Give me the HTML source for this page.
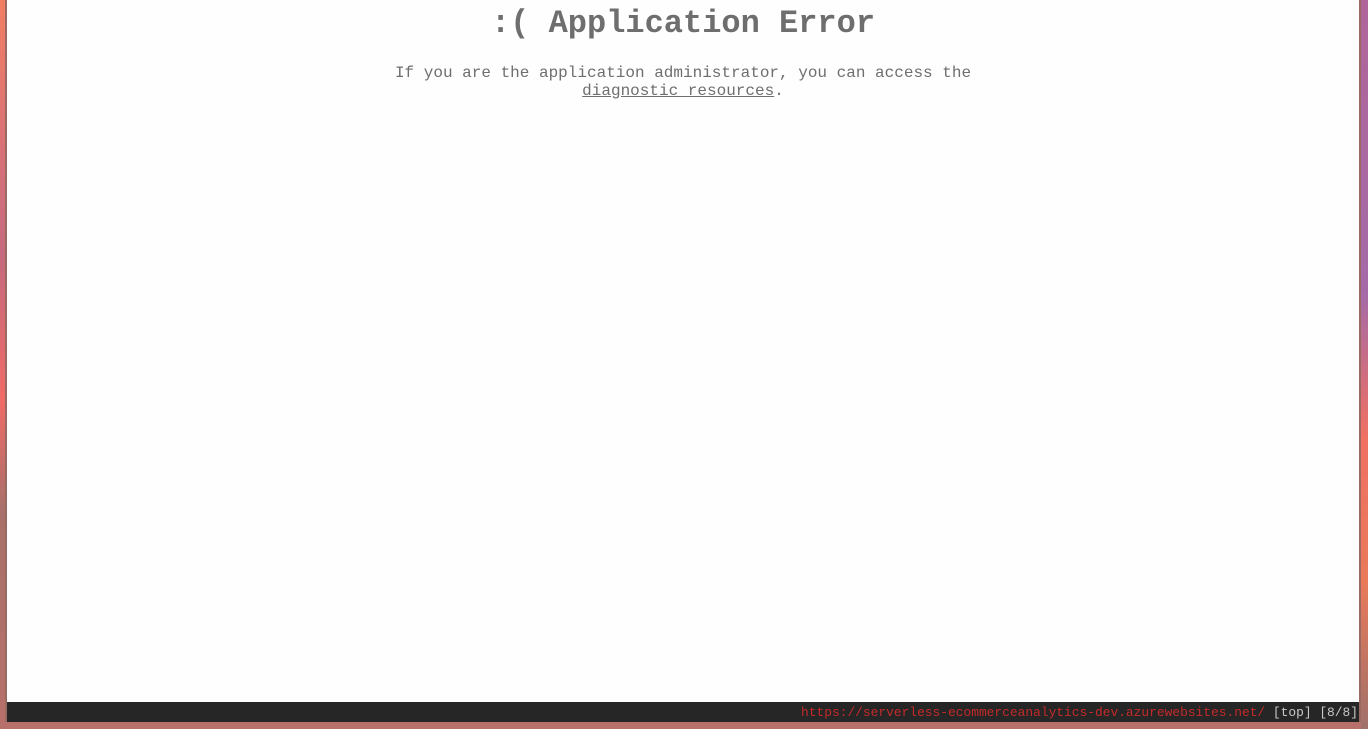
<!DOCTYPE html>
<html><head><meta charset="utf-8"><style>
html,body{margin:0;padding:0;width:1368px;height:729px;overflow:hidden;background:#d9706a;}
.bg{position:absolute;inset:0;background:linear-gradient(180deg,#f27e62 0%,#d97177 20%,#c56a7e 35%,#f06a66 55%,#a8706a 70%,#b8706a 100%);}
.rbg{position:absolute;left:1361px;top:0;width:7px;height:729px;background:linear-gradient(180deg,#b0659a 0%,#a46aa8 40%,#f07062 60%,#e87a5a 80%,#a0706a 100%);}
.win{position:absolute;left:5px;top:0;width:1356px;height:722px;background:#9a6a62;}
.page{position:absolute;left:7px;top:0;width:1352px;height:702px;background:#fefefe;font-family:"Liberation Mono",monospace;color:#6e6e6e;text-align:center;}
h1{margin:0;position:absolute;top:4px;left:0;width:100%;font-size:32px;font-weight:bold;line-height:40px;}
p{margin:0;position:absolute;top:64px;left:0;width:100%;font-size:16px;line-height:18px;}
a{color:#6e6e6e;text-decoration:underline;}
.sb{position:absolute;left:7px;top:702px;width:1351px;padding-right:1px;height:20px;background:#262626;font-family:"Liberation Mono",monospace;font-size:12.9px;line-height:21px;text-align:right;color:#c8c8c8;white-space:pre;}
.sb span{color:#c42a2a;}
</style></head><body>
<div class="bg"></div><div class="rbg"></div><div class="win"></div>
<div class="page">
<h1>:( Application Error</h1>
<p>If you are the application administrator, you can access the<br><a>diagnostic resources</a>.</p>
</div>
<div class="sb"><span>https://serverless-ecommerceanalytics-dev.azurewebsites.net/</span> [top] [8/8]</div>
</body></html>
